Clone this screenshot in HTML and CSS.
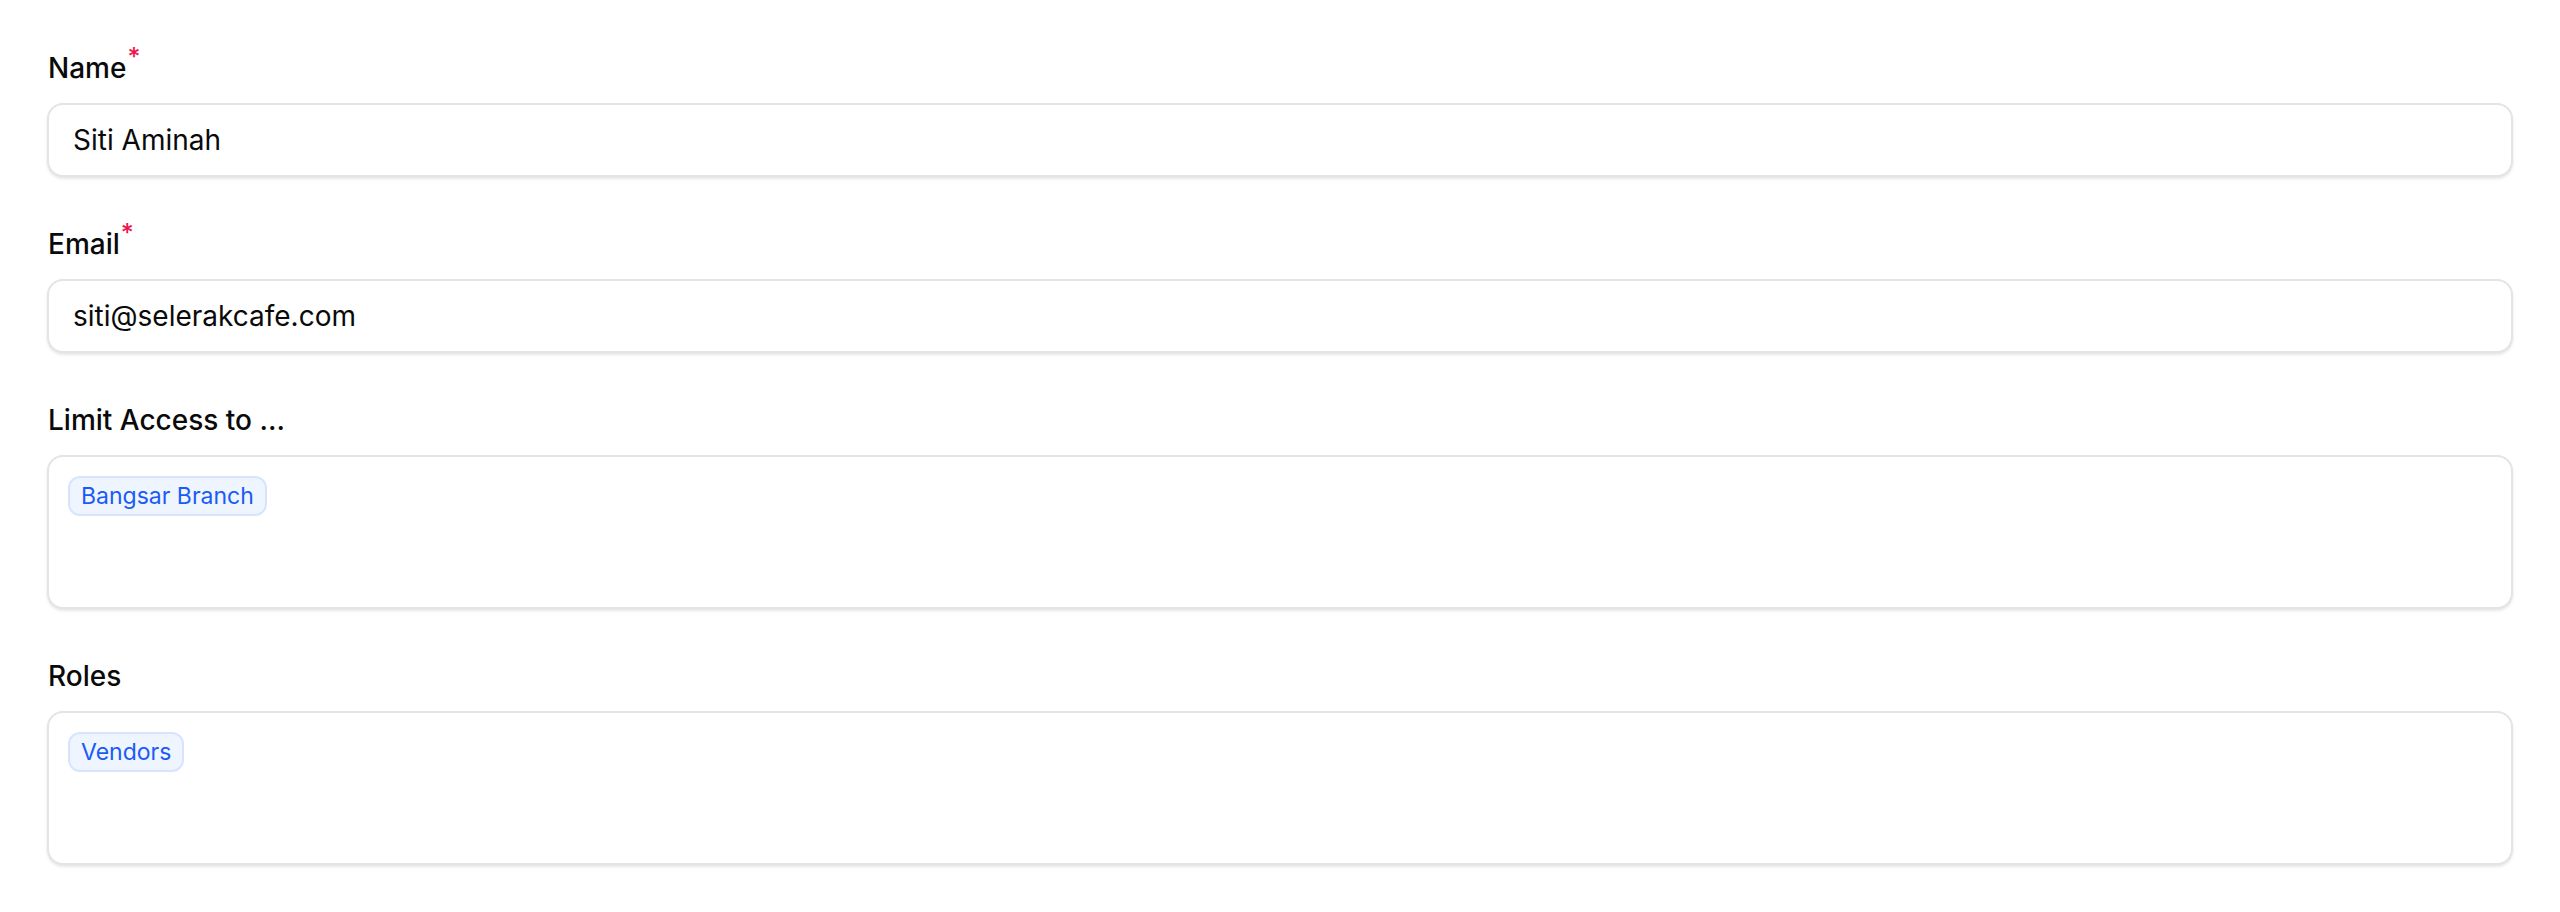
FILE: index.html
```html
<!DOCTYPE html>
<html lang="en">
<head>
<meta charset="utf-8">
<title>Member form</title>
<link rel="stylesheet" href="styles.css">
</head>
<body>
<form class="form">
  <div class="field">
    <label class="label">Name<sup class="req">*</sup></label>
    <div class="input">Siti Aminah</div>
  </div>
  <div class="field">
    <label class="label">Email<sup class="req">*</sup></label>
    <div class="input">siti@selerakcafe.com</div>
  </div>
  <div class="field">
    <label class="label">Limit Access to ...</label>
    <div class="multi">
      <span class="tag">Bangsar Branch</span>
    </div>
  </div>
  <div class="field">
    <label class="label">Roles</label>
    <div class="multi">
      <span class="tag">Vendors</span>
    </div>
  </div>
</form>
</body>
</html>
```
FILE: styles.css
```css
* { box-sizing: border-box; }
html, body { margin: 0; padding: 0; background: #ffffff; }
body {
  font-family: Inter, "Noto Sans", "Liberation Sans", sans-serif;
  color: #0a0a0a;
}
.form {
  display: flex;
  flex-direction: column;
  gap: 47px;
  padding: 48px 47px;
}
.field {
  display: flex;
  flex-direction: column;
  gap: 15px;
}
.label {
  font-size: 28px;
  line-height: 40px;
  font-weight: 500;
  color: #0a0a0a;
  padding-left: 1px;
}
.req {
  color: #f0134d;
  font-size: 25px;
  line-height: 0;
  vertical-align: 12px;
  margin-left: 1px;
  font-weight: 500;
}
.input {
  height: 74px;
  border: 2px solid #e4e4e7;
  border-radius: 16px;
  padding: 0 24px;
  display: flex;
  align-items: center;
  font-size: 28px;
  color: #0a0a0a;
  box-shadow: 0 2px 3px rgba(0, 0, 0, 0.10);
  background: #fff;
}
.multi {
  height: 154px;
  border: 2px solid #e4e4e7;
  border-radius: 16px;
  padding: 19px 19px;
  box-shadow: 0 2px 3px rgba(0, 0, 0, 0.10);
  background: #fff;
  display: flex;
  align-items: flex-start;
  flex-wrap: wrap;
}
.tag {
  display: inline-flex;
  align-items: center;
  height: 40px;
  padding: 0 11px;
  border: 2px solid #d6e4fd;
  background: #eff5ff;
  color: #1b5bf5;
  border-radius: 12px;
  font-size: 23px;
  font-weight: 400;
  line-height: 1;
}
```
